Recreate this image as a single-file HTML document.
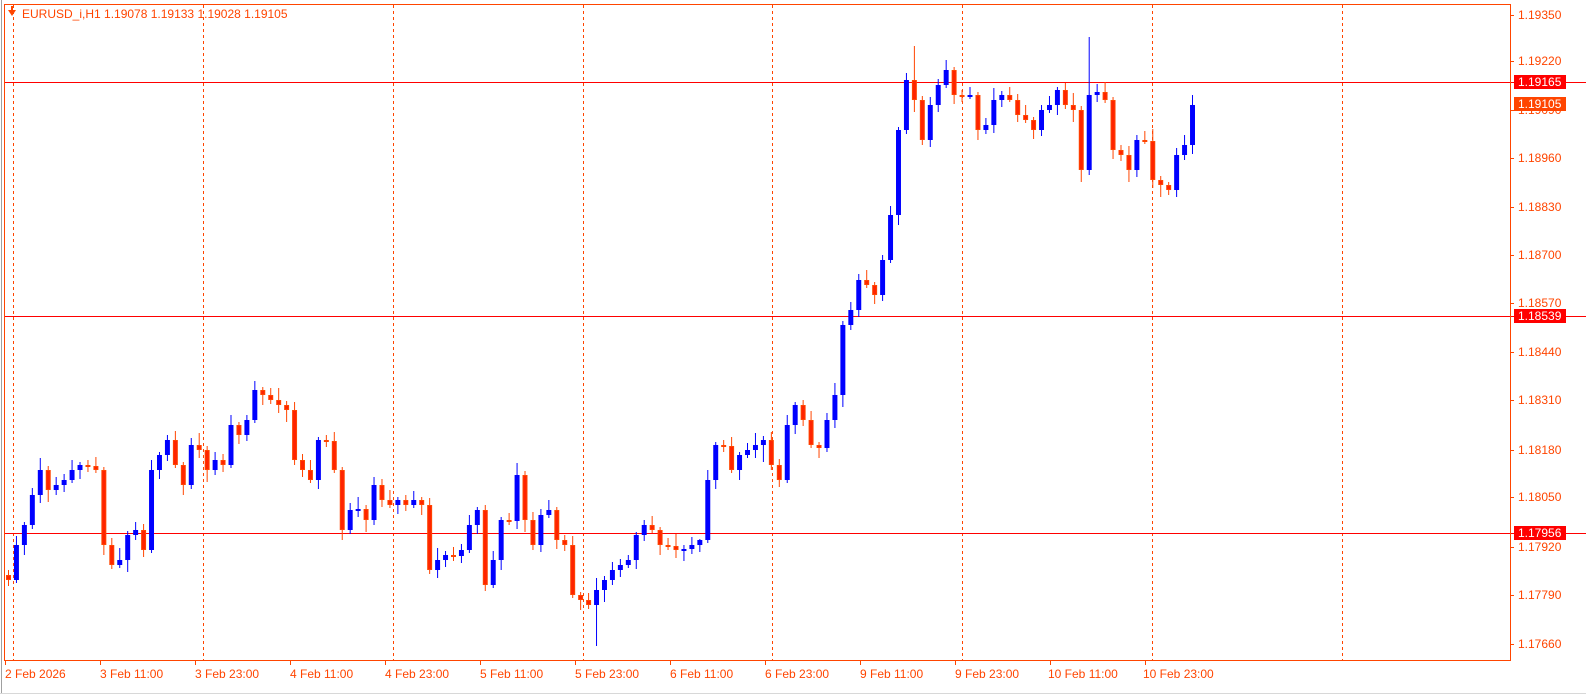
<!DOCTYPE html>
<html><head><meta charset="utf-8"><style>
html,body{margin:0;padding:0;background:#fff;width:1586px;height:696px;overflow:hidden}
svg{position:absolute;left:0;top:0;font-family:"Liberation Sans",sans-serif;font-size:12px}
.b rect{fill:#0000ff}
.r rect{fill:#ff2400;stroke:#ff4500;stroke-width:1}
</style></head><body>
<svg width="1586" height="696" viewBox="0 0 1586 696" xmlns="http://www.w3.org/2000/svg">
<rect x="0" y="0" width="1586" height="696" fill="#fff"/>
<line x1="1.5" y1="0" x2="1.5" y2="694" stroke="#a0a0a0"/>
<line x1="0" y1="693.5" x2="1586" y2="693.5" stroke="#d8d8d8"/>
<g stroke="#ff4500" stroke-dasharray="3,3">
<line x1="13.5" y1="5" x2="13.5" y2="660"/><line x1="203.5" y1="5" x2="203.5" y2="660"/><line x1="393.5" y1="5" x2="393.5" y2="660"/><line x1="583.5" y1="5" x2="583.5" y2="660"/><line x1="772.5" y1="5" x2="772.5" y2="660"/><line x1="962.5" y1="5" x2="962.5" y2="660"/><line x1="1152.5" y1="5" x2="1152.5" y2="660"/><line x1="1342.5" y1="5" x2="1342.5" y2="660"/>
</g>
<g stroke="#ff0000"><line x1="5" y1="82.5" x2="1586" y2="82.5"/><line x1="5" y1="316.5" x2="1586" y2="316.5"/><line x1="5" y1="533.5" x2="1586" y2="533.5"/></g>
<g transform="translate(8,0) scale(0.9933,1) translate(-8,0)">
<path fill="none" stroke="#0000ff" d="M16.5 536V583M24.5 522V555M32.5 488V529M40.5 458V503M56.5 477V495M64.5 474V492M72.5 460V483M80.5 462V479M120.5 548V568M128.5 531V572M136.5 522V540M152.5 460V553M160.5 452V479M168.5 435V461M192.5 438V489M216.5 452V475M232.5 415V468M248.5 415V441M256.5 381V423M320.5 437V489M352.5 503V534M360.5 497V517M376.5 477V525M400.5 497V514M416.5 491V508M440.5 548V578M448.5 551V567M464.5 544V563M472.5 515V553M480.5 507V534M496.5 551V588M504.5 517V570M520.5 463V529M544.5 509V552M552.5 500V518M600.5 578V646M608.5 576V602M616.5 562V585M624.5 559V577M632.5 555V568M640.5 532V569M648.5 520V541M688.5 545V561M696.5 537V554M704.5 539V552M712.5 470V543M720.5 442V489M744.5 452V480M752.5 443V458M760.5 433V458M768.5 436V462M792.5 415V483M800.5 402V434M832.5 413V452M840.5 383V428M848.5 321V407M856.5 302V330M864.5 274V317M888.5 255V301M896.5 206V263M904.5 127V225M912.5 73V134M936.5 97V147M944.5 79V112M952.5 60V88M976.5 87V99M992.5 118V134M1000.5 88V133M1008.5 91V107M1048.5 105V136M1056.5 96V113M1064.5 87V115M1096.5 37V175M1104.5 84V102M1144.5 135V177M1184.5 148V197M1192.5 135V160M1200.5 95V154"/>
<path fill="none" stroke="#ff4500" d="M8.5 570V586M48.5 466V502M88.5 460V472M96.5 457V473M104.5 467V555M112.5 538V569M144.5 524V557M176.5 431V468M184.5 462V495M200.5 433V458M208.5 446V482M224.5 454V472M240.5 422V444M264.5 387V405M272.5 388V404M280.5 388V413M288.5 401V422M296.5 402V465M304.5 454V477M312.5 460V483M328.5 435V447M336.5 432V473M344.5 467V540M368.5 505V532M384.5 479V507M392.5 490V508M408.5 495V511M424.5 497V515M432.5 498V574M456.5 547V561M488.5 505V591M512.5 513V525M528.5 471V532M536.5 512V550M560.5 507V549M568.5 535V551M576.5 536V598M584.5 592V610M592.5 593V609M656.5 516V533M664.5 527V555M672.5 538V550M680.5 534V558M728.5 440V452M736.5 437V473M776.5 432V470M784.5 459V487M808.5 400V426M816.5 411V448M824.5 442V458M872.5 270V288M880.5 282V304M920.5 46V112M928.5 96V145M960.5 67V104M968.5 90V102M984.5 92V140M1016.5 87V102M1024.5 94V122M1032.5 105V123M1040.5 117V139M1072.5 83V109M1080.5 93V122M1088.5 106V182M1112.5 82V103M1120.5 97V159M1128.5 145V161M1136.5 146V182M1152.5 131V144M1160.5 129V188M1168.5 176V197M1176.5 182V195"/>
<g class="b">
<rect x="14" y="545" width="5" height="35"/><rect x="22" y="525" width="5" height="20"/><rect x="30" y="495" width="5" height="30"/><rect x="38" y="470" width="5" height="25"/><rect x="54" y="485" width="5" height="5"/><rect x="62" y="480" width="5" height="5"/><rect x="70" y="470" width="5" height="10"/><rect x="78" y="465" width="5" height="5"/><rect x="118" y="560" width="5" height="5"/><rect x="126" y="535" width="5" height="25"/><rect x="134" y="530" width="5" height="5"/><rect x="150" y="470" width="5" height="80"/><rect x="158" y="455" width="5" height="15"/><rect x="166" y="440" width="5" height="15"/><rect x="190" y="445" width="5" height="40"/><rect x="214" y="460" width="5" height="10"/><rect x="230" y="425" width="5" height="40"/><rect x="246" y="420" width="5" height="15"/><rect x="254" y="390" width="5" height="30"/><rect x="318" y="440" width="5" height="40"/><rect x="350" y="510" width="5" height="20"/><rect x="358" y="509" width="5" height="2"/><rect x="374" y="485" width="5" height="35"/><rect x="398" y="500" width="5" height="5"/><rect x="414" y="500" width="5" height="5"/><rect x="438" y="560" width="5" height="10"/><rect x="446" y="555" width="5" height="5"/><rect x="462" y="550" width="5" height="6"/><rect x="470" y="525" width="5" height="25"/><rect x="478" y="510" width="5" height="15"/><rect x="494" y="560" width="5" height="25"/><rect x="502" y="520" width="5" height="40"/><rect x="518" y="475" width="5" height="46"/><rect x="542" y="515" width="5" height="30"/><rect x="550" y="510" width="5" height="5"/><rect x="598" y="590" width="5" height="15"/><rect x="606" y="580" width="5" height="10"/><rect x="614" y="570" width="5" height="10"/><rect x="622" y="565" width="5" height="5"/><rect x="630" y="560" width="5" height="5"/><rect x="638" y="535" width="5" height="25"/><rect x="646" y="525" width="5" height="10"/><rect x="686" y="549" width="5" height="2"/><rect x="694" y="545" width="5" height="4"/><rect x="702" y="540" width="5" height="5"/><rect x="710" y="480" width="5" height="60"/><rect x="718" y="445" width="5" height="35"/><rect x="742" y="455" width="5" height="15"/><rect x="750" y="450" width="5" height="5"/><rect x="758" y="445" width="5" height="5"/><rect x="766" y="440" width="5" height="5"/><rect x="790" y="425" width="5" height="55"/><rect x="798" y="405" width="5" height="20"/><rect x="830" y="420" width="5" height="28"/><rect x="838" y="395" width="5" height="25"/><rect x="846" y="325" width="5" height="70"/><rect x="854" y="310" width="5" height="15"/><rect x="862" y="280" width="5" height="30"/><rect x="886" y="260" width="5" height="35"/><rect x="894" y="215" width="5" height="45"/><rect x="902" y="130" width="5" height="85"/><rect x="910" y="80" width="5" height="50"/><rect x="934" y="105" width="5" height="35"/><rect x="942" y="85" width="5" height="20"/><rect x="950" y="70" width="5" height="15"/><rect x="974" y="95" width="5" height="2"/><rect x="990" y="125" width="5" height="5"/><rect x="998" y="100" width="5" height="25"/><rect x="1006" y="95" width="5" height="5"/><rect x="1046" y="110" width="5" height="20"/><rect x="1054" y="105" width="5" height="5"/><rect x="1062" y="90" width="5" height="15"/><rect x="1094" y="95" width="5" height="75"/><rect x="1102" y="92" width="5" height="3"/><rect x="1142" y="140" width="5" height="30"/><rect x="1182" y="155" width="5" height="35"/><rect x="1190" y="145" width="5" height="10"/><rect x="1198" y="105" width="5" height="40"/>
</g>
<g class="r">
<rect x="6.5" y="575.5" width="4" height="4"/><rect x="46.5" y="470.5" width="4" height="19"/><rect x="86.5" y="465.5" width="4" height="1"/><rect x="94.5" y="466.5" width="4" height="3"/><rect x="102.5" y="470.5" width="4" height="74"/><rect x="110.5" y="545.5" width="4" height="19"/><rect x="142.5" y="530.5" width="4" height="19"/><rect x="174.5" y="440.5" width="4" height="24"/><rect x="182.5" y="465.5" width="4" height="19"/><rect x="198.5" y="445.5" width="4" height="4"/><rect x="206.5" y="450.5" width="4" height="19"/><rect x="222.5" y="460.5" width="4" height="4"/><rect x="238.5" y="425.5" width="4" height="9"/><rect x="262.5" y="390.5" width="4" height="4"/><rect x="270.5" y="395.5" width="4" height="4"/><rect x="278.5" y="400.5" width="4" height="4"/><rect x="286.5" y="405.5" width="4" height="4"/><rect x="294.5" y="410.5" width="4" height="49"/><rect x="302.5" y="460.5" width="4" height="9"/><rect x="310.5" y="470.5" width="4" height="9"/><rect x="326.5" y="440.5" width="4" height="1"/><rect x="334.5" y="441.5" width="4" height="28"/><rect x="342.5" y="470.5" width="4" height="59"/><rect x="366.5" y="509.5" width="4" height="10"/><rect x="382.5" y="485.5" width="4" height="14"/><rect x="390.5" y="500.5" width="4" height="4"/><rect x="406.5" y="500.5" width="4" height="4"/><rect x="422.5" y="500.5" width="4" height="4"/><rect x="430.5" y="505.5" width="4" height="64"/><rect x="454.5" y="555.5" width="4" height="1"/><rect x="486.5" y="510.5" width="4" height="74"/><rect x="510.5" y="520.5" width="4" height="1"/><rect x="526.5" y="475.5" width="4" height="44"/><rect x="534.5" y="520.5" width="4" height="24"/><rect x="558.5" y="510.5" width="4" height="29"/><rect x="566.5" y="540.5" width="4" height="4"/><rect x="574.5" y="545.5" width="4" height="49"/><rect x="582.5" y="595.5" width="4" height="4"/><rect x="590.5" y="600.5" width="4" height="4"/><rect x="654.5" y="525.5" width="4" height="4"/><rect x="662.5" y="530.5" width="4" height="14"/><rect x="670.5" y="545.5" width="4" height="1"/><rect x="678.5" y="546.5" width="4" height="3"/><rect x="726.5" y="445.5" width="4" height="1"/><rect x="734.5" y="446.5" width="4" height="23"/><rect x="774.5" y="440.5" width="4" height="24"/><rect x="782.5" y="465.5" width="4" height="14"/><rect x="806.5" y="405.5" width="4" height="14"/><rect x="814.5" y="420.5" width="4" height="24"/><rect x="822.5" y="445.5" width="4" height="2"/><rect x="870.5" y="280.5" width="4" height="4"/><rect x="878.5" y="285.5" width="4" height="9"/><rect x="918.5" y="80.5" width="4" height="19"/><rect x="926.5" y="100.5" width="4" height="39"/><rect x="958.5" y="70.5" width="4" height="24"/><rect x="966.5" y="95.5" width="4" height="1"/><rect x="982.5" y="95.5" width="4" height="34"/><rect x="1014.5" y="95.5" width="4" height="4"/><rect x="1022.5" y="100.5" width="4" height="14"/><rect x="1030.5" y="115.5" width="4" height="4"/><rect x="1038.5" y="120.5" width="4" height="9"/><rect x="1070.5" y="90.5" width="4" height="14"/><rect x="1078.5" y="105.5" width="4" height="4"/><rect x="1086.5" y="110.5" width="4" height="59"/><rect x="1110.5" y="92.5" width="4" height="7"/><rect x="1118.5" y="100.5" width="4" height="49"/><rect x="1126.5" y="150.5" width="4" height="4"/><rect x="1134.5" y="155.5" width="4" height="14"/><rect x="1150.5" y="140.5" width="4" height="1"/><rect x="1158.5" y="141.5" width="4" height="38"/><rect x="1166.5" y="180.5" width="4" height="4"/><rect x="1174.5" y="185.5" width="4" height="4"/>
</g>
</g>
<rect x="4.5" y="4.5" width="1506" height="656" fill="none" stroke="#ff4500"/>
<g fill="#ff4500">
<g stroke="#ff4500"><line x1="1510" y1="15.5" x2="1514" y2="15.5"/><line x1="1510" y1="61.5" x2="1514" y2="61.5"/><line x1="1510" y1="110.5" x2="1514" y2="110.5"/><line x1="1510" y1="158.5" x2="1514" y2="158.5"/><line x1="1510" y1="207.5" x2="1514" y2="207.5"/><line x1="1510" y1="255.5" x2="1514" y2="255.5"/><line x1="1510" y1="303.5" x2="1514" y2="303.5"/><line x1="1510" y1="352.5" x2="1514" y2="352.5"/><line x1="1510" y1="400.5" x2="1514" y2="400.5"/><line x1="1510" y1="450.5" x2="1514" y2="450.5"/><line x1="1510" y1="497.5" x2="1514" y2="497.5"/><line x1="1510" y1="547.5" x2="1514" y2="547.5"/><line x1="1510" y1="595.5" x2="1514" y2="595.5"/><line x1="1510" y1="644.5" x2="1514" y2="644.5"/></g>
<text x="1518" y="19">1.19350</text><text x="1518" y="65">1.19220</text><text x="1518" y="114">1.19090</text><text x="1518" y="162">1.18960</text><text x="1518" y="211">1.18830</text><text x="1518" y="259">1.18700</text><text x="1518" y="307">1.18570</text><text x="1518" y="356">1.18440</text><text x="1518" y="404">1.18310</text><text x="1518" y="454">1.18180</text><text x="1518" y="501">1.18050</text><text x="1518" y="551">1.17920</text><text x="1518" y="599">1.17790</text><text x="1518" y="648">1.17660</text>
<rect x="1514" y="75" width="52" height="14" fill="#ff0000"/><text x="1518" y="86" fill="#fff">1.19165</text>
<rect x="1514" y="97" width="52" height="14" fill="#ff4500"/><text x="1518" y="108" fill="#fff">1.19105</text>
<rect x="1514" y="309" width="52" height="14" fill="#ff0000"/><text x="1518" y="320" fill="#fff">1.18539</text>
<rect x="1514" y="526" width="52" height="14" fill="#ff0000"/><text x="1518" y="537" fill="#fff">1.17956</text>
<g stroke="#ff4500"><line x1="5.5" y1="661" x2="5.5" y2="665"/><line x1="100.5" y1="661" x2="100.5" y2="665"/><line x1="195.5" y1="661" x2="195.5" y2="665"/><line x1="290.5" y1="661" x2="290.5" y2="665"/><line x1="385.5" y1="661" x2="385.5" y2="665"/><line x1="480.5" y1="661" x2="480.5" y2="665"/><line x1="575.5" y1="661" x2="575.5" y2="665"/><line x1="670.5" y1="661" x2="670.5" y2="665"/><line x1="765.5" y1="661" x2="765.5" y2="665"/><line x1="860.5" y1="661" x2="860.5" y2="665"/><line x1="955.5" y1="661" x2="955.5" y2="665"/><line x1="1050.5" y1="661" x2="1050.5" y2="665"/><line x1="1145.5" y1="661" x2="1145.5" y2="665"/></g>
<text x="5" y="678">2 Feb 2026</text><text x="100" y="678">3 Feb 11:00</text><text x="195" y="678">3 Feb 23:00</text><text x="290" y="678">4 Feb 11:00</text><text x="385" y="678">4 Feb 23:00</text><text x="480" y="678">5 Feb 11:00</text><text x="575" y="678">5 Feb 23:00</text><text x="670" y="678">6 Feb 11:00</text><text x="765" y="678">6 Feb 23:00</text><text x="860" y="678">9 Feb 11:00</text><text x="955" y="678">9 Feb 23:00</text><text x="1048" y="678">10 Feb 11:00</text><text x="1143" y="678">10 Feb 23:00</text>
</g>
<path d="M8 10 L16 10 L12 16 Z" fill="#ff4500"/>
<rect x="11" y="6" width="2" height="4" fill="#ff4500"/>
<text x="22" y="18" fill="#ff4500">EURUSD_i,H1  1.19078 1.19133 1.19028 1.19105</text>
</svg>
</body></html>
